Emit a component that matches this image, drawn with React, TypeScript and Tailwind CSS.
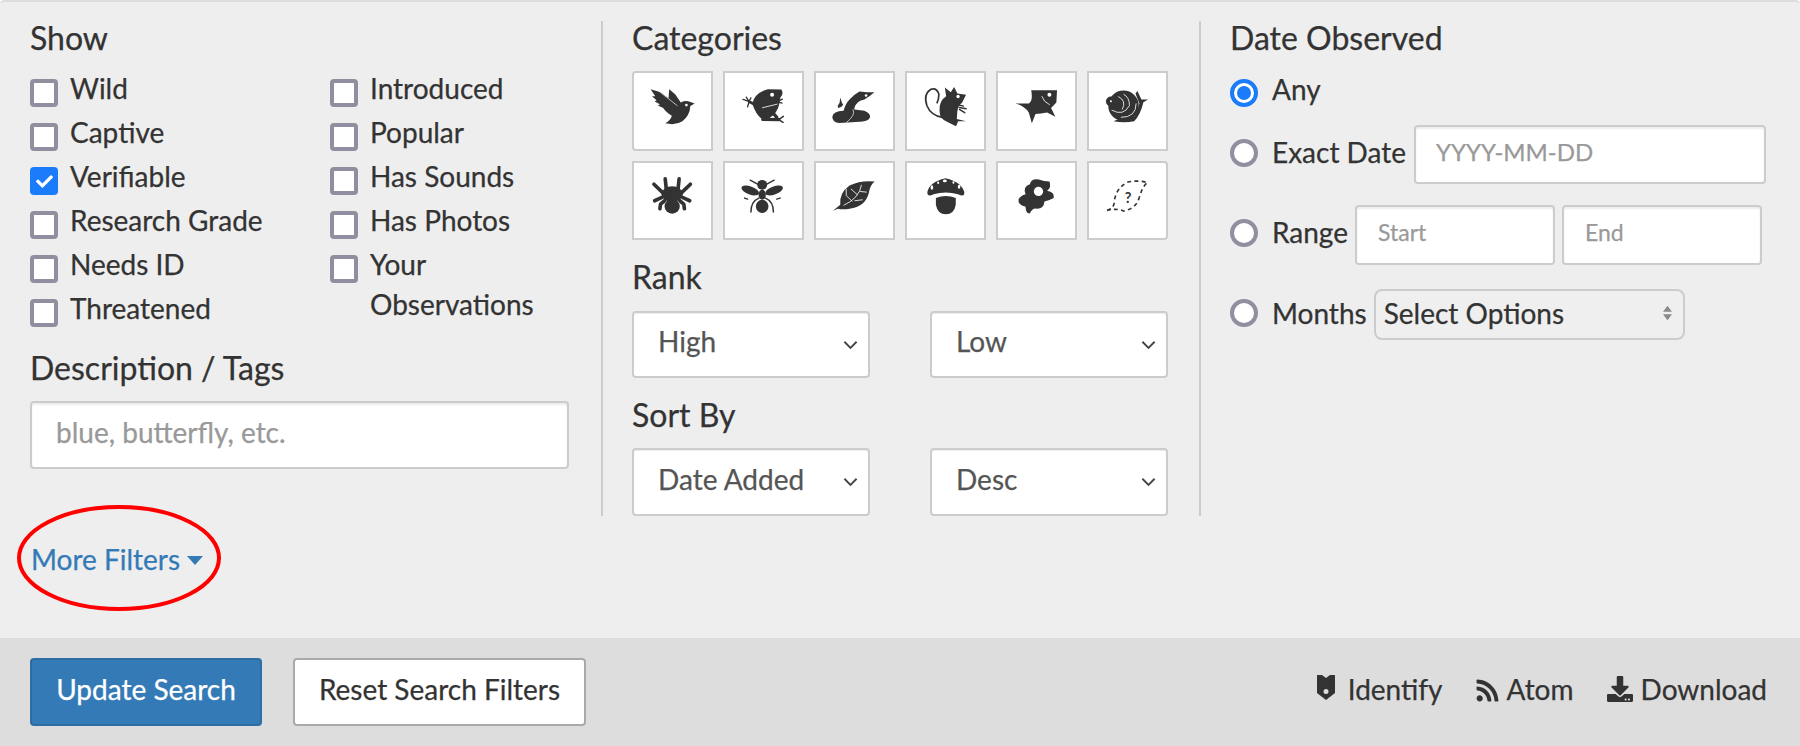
import React from "react";
import { FaRss, FaDownload, FaCheck } from "react-icons/fa";

const W = "#fff";
const D = "#333";

function Tile({ vb, className, children }: { vb: string; className?: string; children: React.ReactNode }) {
  return (
    <button className={"h-[79.5px] bg-white border-2 border-[#ccc] flex items-center justify-center " + (className ?? "")}>
      <svg viewBox={vb} className="w-full h-full block">{children}</svg>
    </button>
  );
}

const Bird = () => (
  <Tile vb="14 26 228 228" className="rounded-l-[4px]">
    <path fill={D} d="M62 75 L92 84 L116 102 L118 75 L136 90 L153 115 Q168 108 180 113 L195 118 L182 126 Q180 155 158 172 Q138 185 106 178 Q123 168 126 155 Q108 145 100 132 L84 124 L90 120 L74 112 L80 108 L66 96 L76 96 Z" />
    <path fill="none" stroke={W} strokeWidth="2" d="M88 82 L143 125" />
    <circle cx="170" cy="123" r="4" fill={W} />
  </Tile>
);

const Frog = () => (
  <Tile vb="288 26 228 228">
    <path fill={D} d="M368 118 Q376 85 415 75 L456 76 Q464 88 453 100 L450 118 Q444 148 420 162 L396 164 Q378 150 368 118 Z" />
    <g fill="none" stroke={D} strokeLinecap="round" strokeLinejoin="round">
      <path strokeWidth="8" d="M380 124 L358 112" />
      <path strokeWidth="4" d="M358 112 L340 106 M358 112 L350 99 M358 112 L364 101 M358 114 L354 128" />
      <path strokeWidth="10" d="M400 166 L448 167 M425 140 L442 160" />
      <path strokeWidth="4.5" d="M448 167 L462 157 M448 167 L461 175" />
      <path strokeWidth="4" d="M448 110 L459 105 M448 114 L458 117" />
    </g>
    <path fill="none" stroke={W} strokeWidth="2.5" d="M398 131 L444 120" />
    <circle cx="428" cy="92" r="6" fill={W} />
  </Tile>
);

const Snake = () => (
  <Tile vb="561 26 228 228">
    <path fill={D} d="M608 158 Q610 142 642 140 Q648 118 660 106 Q672 92 690 82 L712 84 L735 84 L722 95 L705 106 L692 110 Q676 120 674 136 L705 140 Q724 148 722 160 Q716 174 690 173 L630 177 Q608 176 608 158 Z" />
    <path fill={D} d="M632 100 L637 116 L641 122 Q636 130 626 132 L624 126 L630 116 Z" />
    <path fill="none" stroke={W} strokeWidth="2" d="M650 176 Q680 152 670 136" />
    <circle cx="710" cy="94" r="4" fill={W} />
  </Tile>
);

const Mouse = () => (
  <Tile vb="20 26 228 228">
    <path fill="none" stroke={D} strokeWidth="5" d="M125 160 Q90 155 78 125 Q66 90 90 75 Q108 70 114 90 Q114 105 108 118" />
    <path fill={D} d="M116 140 Q114 110 136 96 L132 70 L150 84 L160 68 L170 88 L196 92 L184 116 Q172 125 170 140 L168 165 L196 172 L172 172 L166 187 L140 174 Q116 165 116 140 Z" />
    <g fill="none" stroke={D} strokeLinecap="round">
      <path strokeWidth="4.5" d="M172 122 L188 126 M176 130 L196 134 M176 136 L192 146" />
    </g>
    <circle cx="172" cy="97" r="5" fill={W} />
  </Tile>
);

const Fish = () => (
  <Tile vb="294 26 228 228">
    <path fill={D} d="M345 118 L385 118 Q398 110 392 78 L470 78 L468 115 L452 132 L465 158 L440 145 Q420 148 405 150 L394 178 L385 146 Q375 128 345 118 Z" />
    <circle cx="447" cy="92" r="6" fill={W} />
    <path fill="none" stroke={W} strokeWidth="2.5" d="M424 96 Q430 114 448 122" />
  </Tile>
);

const Snail = () => (
  <Tile vb="566 26 228 228">
    <circle cx="668" cy="125" r="46" fill={D} />
    <path fill={D} d="M638 172 L660 162 L700 158 Q712 140 716 118 L704 88 L710 80 L722 106 L742 106 L728 114 Q720 150 700 172 Q670 178 638 172 Z" />
    <circle cx="630" cy="112" r="15" fill={D} />
    <circle cx="620" cy="110" r="4" fill={D} />
    <path fill="none" stroke={W} strokeWidth="2.5" d="M652 97 Q678 110 664 136 M632 138 Q668 158 686 124 Q686 100 668 90 M660 160 Q706 160 706 118" />
    <circle cx="630" cy="111" r="3" fill={W} />
  </Tile>
);

const Spider = () => (
  <Tile vb="14 294 228 228">
    <g fill="none" stroke={D} strokeWidth="11" strokeLinecap="round" strokeLinejoin="round">
      <path d="M110 380 L106 342 M144 380 L148 342" />
      <path d="M100 385 L72 358 M154 385 L182 358" />
      <path d="M96 398 L74 408 M158 398 L180 408" />
      <path d="M104 408 L92 418 L90 432 M150 408 L162 418 L164 432" />
    </g>
    <ellipse cx="127" cy="388" rx="32" ry="24" fill={D} />
    <ellipse cx="127" cy="425" rx="23" ry="22" fill={D} />
  </Tile>
);

const Ant = () => (
  <Tile vb="288 294 228 228">
    <g fill={D}>
      <circle cx="398" cy="360" r="15" />
      <ellipse cx="398" cy="390" rx="11" ry="15" />
      <ellipse cx="398" cy="425" rx="19" ry="20" />
      <ellipse cx="362" cy="377" rx="28" ry="12" transform="rotate(20 362 377)" />
      <ellipse cx="434" cy="377" rx="28" ry="12" transform="rotate(-20 434 377)" />
    </g>
    <g fill="none" stroke={D} strokeWidth="4.5" strokeLinecap="round">
      <path d="M384 358 L362 346 M412 358 L434 346" />
      <path d="M388 400 Q364 410 364 442 M408 400 Q432 410 432 442" />
      <path d="M345 400 L354 403 M442 403 L452 400" />
    </g>
  </Tile>
);

const Leaf = () => (
  <Tile vb="561 294 228 228">
    <path fill={D} d="M610 438 L632 420 Q628 385 660 362 Q695 345 736 350 Q722 360 718 385 Q708 425 660 432 Q640 436 625 432 Z" />
    <path fill="none" stroke={W} strokeWidth="2.5" d="M642 422 Q690 400 696 360 M668 410 L650 392 L650 372 M684 390 L664 372 M692 380 L712 382 M675 408 L700 405" />
  </Tile>
);

const Mushroom = () => (
  <Tile vb="20 294 228 228">
    <path fill={D} d="M79 385 Q82 352 134 340 Q186 352 191 385 Q190 398 172 388 Q135 378 98 388 Q81 398 79 385 Z" />
    <path fill={D} d="M105 400 Q135 388 165 400 L165 420 Q160 449 135 449 Q110 449 105 420 Z" />
    <g fill={W}>
      <ellipse cx="93" cy="368" rx="4" ry="7" />
      <ellipse cx="132" cy="348" rx="6" ry="4" />
      <ellipse cx="175" cy="366" rx="4" ry="6" />
      <ellipse cx="112" cy="354" rx="3" ry="4" />
      <ellipse cx="158" cy="353" rx="3" ry="4" />
    </g>
  </Tile>
);

const Protozoa = () => (
  <Tile vb="294 294 228 228">
    <path fill={D} d="M375 388 Q366 365 388 358 Q392 340 415 344 Q430 350 447 350 Q454 368 440 378 Q464 382 460 400 Q446 408 432 410 Q430 432 410 432 Q396 428 388 446 Q376 448 375 426 Q350 420 354 403 Q360 392 375 388 Z" />
    <circle cx="414" cy="380" r="14" fill={W} />
  </Tile>
);

const Unknown = () => (
  <Tile vb="566 294 228 228" className="rounded-r-[4px]">
    <path fill="none" stroke={D} strokeWidth="5" strokeDasharray="12 10" d="M618 437 Q640 432 640 410 Q645 370 680 352 Q710 345 740 353 Q725 365 715 400 Q705 432 668 439 Q650 430 618 437" />
    <text x="682" y="414" textAnchor="middle" fontSize="44" fontWeight="700" fill={D} fontFamily="Lato, sans-serif">?</text>
  </Tile>
);

function Check({ label, checked, lines }: { label: React.ReactNode; checked?: boolean; lines?: boolean }) {
  return (
    <div className={"flex items-start gap-[12px] " + (lines ? "" : "h-[44px]")}>
      {checked ? (
        <span className="w-[28px] h-[28px] shrink-0 rounded-[4px] bg-[#1a7bfb] flex items-center justify-center text-white text-[17px]">
          <FaCheck />
        </span>
      ) : (
        <span className="w-[28px] h-[28px] shrink-0 rounded-[4px] bg-white border-[4px] border-[#908f9f]" />
      )}
      <span className="-mt-[11px] leading-[40px] whitespace-nowrap">{label}</span>
    </div>
  );
}

function Radio({ checked }: { checked?: boolean }) {
  return checked ? (
    <span className="w-[28px] h-[28px] shrink-0 rounded-full bg-white border-[4px] border-[#1a7bfb] flex items-center justify-center">
      <span className="block w-[14px] h-[14px] rounded-full bg-[#1a7bfb]" />
    </span>
  ) : (
    <span className="w-[28px] h-[28px] shrink-0 rounded-full bg-white border-[4px] border-[#908f9f]" />
  );
}

function Sel({ value, className }: { value: string; className?: string }) {
  return (
    <div className={"relative w-[238px] bg-white border-2 border-[#ccc] rounded-[4px] shadow-[inset_0_1px_1px_rgba(0,0,0,0.075)] " + (className ?? "")}>
      <select defaultValue={value} className="w-full h-full appearance-none bg-transparent pl-[24px] pb-[7px] text-[#555] outline-none">
        <option>{value}</option>
      </select>
      <svg viewBox="0 0 16 10" className="absolute right-[10px] top-[27px] w-[15px] h-[10px] pointer-events-none">
        <path d="M1.5 1.5 L8 8 L14.5 1.5" fill="none" stroke="#444" strokeWidth="2" />
      </svg>
    </div>
  );
}

const inputCls =
  "bg-white border-2 border-[#ccc] rounded-[4px] shadow-[inset_0_2px_2px_rgba(0,0,0,0.075)] outline-none pb-[6px] placeholder:text-[#999]";

const H = "text-[32px] h-[36px] leading-[34px]";

export default function App() {
  return (
    <div className="w-[1800px] h-[746px] bg-white font-[Lato,sans-serif] text-[#333] text-[28px] overflow-hidden [-webkit-text-stroke:0.25px]">
      <div className="h-[638px] bg-[#eee] border-t-2 border-[#ddd] rounded-t-[4px] pt-[19px]">
        <div className="flex h-[495px]">
          <div className="w-[601px] pl-[30px] pr-[32px]">
            <h2 className={H}>Show</h2>
            <div className="flex mt-[22px]">
              <div className="w-[300px]">
                <Check label="Wild" />
                <Check label="Captive" />
                <Check label="Verifiable" checked />
                <Check label="Research Grade" />
                <Check label="Needs ID" />
                <Check label="Threatened" />
              </div>
              <div>
                <Check label="Introduced" />
                <Check label="Popular" />
                <Check label="Has Sounds" />
                <Check label="Has Photos" />
                <Check label={<>Your<br />Observations</>} lines />
              </div>
            </div>
            <h2 className={H + " mt-[8px]"}>Description / Tags</h2>
            <input placeholder="blue, butterfly, etc." className={inputCls + " w-[539px] h-[68px] mt-[14px] pl-[24px]"} />
          </div>

          <div className="w-[598px] border-l-2 border-[#ccc] pl-[29px]">
            <h2 className={H}>Categories</h2>
            <div className="grid grid-cols-6 gap-[10px] w-[536px] mt-[14px]">
              <Bird /><Frog /><Snake /><Mouse /><Fish /><Snail />
              <Spider /><Ant /><Leaf /><Mushroom /><Protozoa /><Unknown />
            </div>
            <h2 className={H + " mt-[20px]"}>Rank</h2>
            <div className="flex justify-between w-[536px] mt-[15px]">
              <Sel value="High" className="h-[67px]" />
              <Sel value="Low" className="h-[67px]" />
            </div>
            <h2 className={H + " mt-[20px]"}>Sort By</h2>
            <div className="flex justify-between w-[536px] mt-[14px]">
              <Sel value="Date Added" className="h-[68px]" />
              <Sel value="Desc" className="h-[68px]" />
            </div>
          </div>

          <div className="flex-1 border-l-2 border-[#ccc] pl-[29px]">
            <h2 className={H}>Date Observed</h2>
            <div className="flex items-center gap-[14px] h-[28px] mt-[22px]">
              <Radio checked />
              <span className="-mt-[9px]">Any</span>
            </div>
            <div className="flex items-center mt-[18px] h-[59px]">
              <div className="flex items-center gap-[14px] mb-[3px]">
                <Radio />
                <span className="-mt-[2px]">Exact Date</span>
              </div>
              <input placeholder="YYYY-MM-DD" className={inputCls + " ml-[8px] w-[352px] h-full pl-[20px] text-[24px]"} />
            </div>
            <div className="flex items-center mt-[21px] h-[60px]">
              <div className="flex items-center gap-[14px] mb-[4px]">
                <Radio />
                <span className="-mt-[2px]">Range</span>
              </div>
              <input placeholder="Start" className={inputCls + " ml-[7px] w-[200px] h-full pl-[21px] text-[23px]"} />
              <input placeholder="End" className={inputCls + " ml-[7px] w-[200px] h-full pl-[21px] text-[23px]"} />
            </div>
            <div className="flex items-center mt-[24px] h-[51px]">
              <div className="flex items-center gap-[14px] mb-[3px]">
                <Radio />
                <span>Months</span>
              </div>
              <div className="relative ml-[7px] w-[311px] h-full">
                <select defaultValue="Select Options" className="w-full h-full appearance-none bg-[#efefef] border-2 border-[#ccc] rounded-[8px] pl-[8px] pb-[3px] text-[#333] outline-none">
                  <option>Select Options</option>
                </select>
                <svg viewBox="0 0 12 20" className="absolute right-[12px] top-[15px] w-[11px] h-[18px] pointer-events-none">
                  <path d="M6 2 L11 8.5 L1 8.5 Z M6 18 L11 11.5 L1 11.5 Z" fill="#8a8a8a" />
                </svg>
              </div>
            </div>
          </div>
        </div>

        <div className="relative mt-[23px] ml-[31px] h-[40px] leading-[40px] text-[#337ab7] flex items-center w-fit">
          <a>More Filters</a>
          <svg viewBox="0 0 16 9" className="ml-[7px] mt-[2px] w-[16px] h-[9px]">
            <path d="M0 0 L16 0 L8 9 Z" fill="#337ab7" />
          </svg>
          <svg viewBox="0 0 210 110" className="absolute left-[-15px] top-[-33px] w-[210px] h-[110px] pointer-events-none overflow-visible">
            <ellipse cx="103" cy="52" rx="100" ry="51" fill="none" stroke="#f00" strokeWidth="4" />
          </svg>
        </div>
      </div>

      <div className="h-[108px] bg-[#ddd] flex items-center justify-between pl-[30px] pr-[33px]">
        <div className="flex gap-[31px]">
          <button className="w-[232px] h-[68px] pb-[6px] bg-[#337ab7] border-2 border-[#2e6da4] rounded-[4px] text-white">Update Search</button>
          <button className="w-[293px] h-[68px] pb-[6px] bg-white border-2 border-[#aaa] rounded-[4px] text-[#333]">Reset Search Filters</button>
        </div>
        <div className="flex items-center -mt-[6px]">
          <svg viewBox="0 0 18 25" className="w-[18px] h-[25px] -mt-[3px]">
            <path fill="#333" fillRule="evenodd" d="M0 0 L5 0 L9 3 L13 0 L18 0 L18 18 L9 25 L0 18 Z M9 14 A2.5 2.5 0 1 0 9 19 A2.5 2.5 0 1 0 9 14 Z" />
          </svg>
          <span className="ml-[13px]">Identify</span>
          <FaRss className="ml-[32px] text-[25px] text-[#333] mt-[3px]" />
          <span className="ml-[7px]">Atom</span>
          <FaDownload className="ml-[33px] text-[26px] text-[#333]" />
          <span className="ml-[8px]">Download</span>
        </div>
      </div>
    </div>
  );
}
